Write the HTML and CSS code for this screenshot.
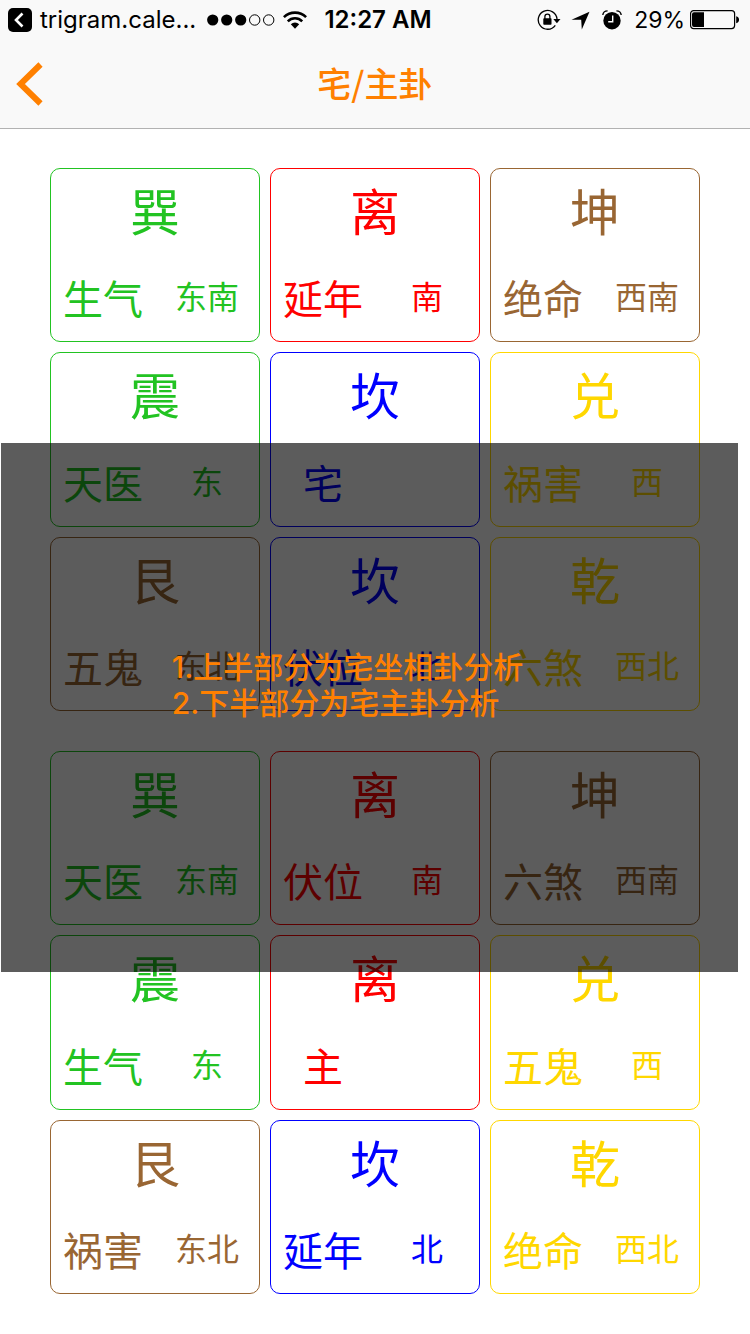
FILE: index.html
```html
<!DOCTYPE html>
<html lang="zh-CN">
<head>
<meta charset="utf-8">
<meta name="viewport" content="width=device-width, initial-scale=1">
<title>宅/主卦</title>
<link rel="stylesheet" href="styles.css">
</head>
<body>
<header class="header">
  <div class="status">
    <div class="status-left">
      <a class="return-link" href="#">
        <svg width="24" height="24" viewBox="0 0 24 24" aria-hidden="true"><rect width="24" height="24" rx="5"/><path d="M14.500 5.500 8 12l6.500 6.500" fill="none" stroke="#fff" stroke-width="2.600"/></svg>
        <span>trigram.cale...</span>
      </a>
      <svg class="signal" width="68" height="12" viewBox="0 0 68 12" aria-hidden="true"><circle cx="5.700" cy="6" r="5.600"/><circle cx="19.700" cy="6" r="5.600"/><circle cx="33.700" cy="6" r="5.600"/><g fill="none" stroke="#000"><circle cx="47.700" cy="6" r="5.200"/><circle cx="61.700" cy="6" r="5.200"/></g></svg>
      <svg class="wifi" width="24" height="18" viewBox="0 0 24 18" aria-hidden="true"><g fill="none" stroke="#000" stroke-width="2.600"><path d="M.9 6.200a15.700 15.700 0 0 1 22.200 0"/><path d="M4.800 10.300a10.200 10.200 0 0 1 14.400 0"/></g><path d="M7.800 13.200a6 6 0 0 1 8.400 0L12 17.800Z"/></svg>
    </div>
    <time class="clock">12:27 AM</time>
    <div class="status-right">
      <svg width="24" height="22" viewBox="0 0 24 22" aria-hidden="true"><path d="M18.300 16.300A9.400 9.400 0 1 1 20 10" fill="none" stroke="#000" stroke-width="1.300"/><path d="M16.300 10h7.200l-3.600 4.200Z"/><rect x="6.300" y="9.300" width="8.200" height="6.400" rx=".8"/><path d="M7.900 10V7.600a2.500 2.500 0 0 1 5 0V10" fill="none" stroke="#000" stroke-width="1.300"/></svg>
      <svg class="location" width="19" height="19" viewBox="0 0 19 19" aria-hidden="true"><path d="M.5 8.800 18.500.7 10.800 18.500 10.200 8.800Z"/></svg>
      <svg class="alarm" width="20" height="20" viewBox="0 0 20 20" aria-hidden="true"><circle cx="10" cy="10.700" r="8.700"/><path d="M.8 5C1.100 2.500 3 .9 5.600.9M19.200 5C18.900 2.500 17 .9 14.400.9" fill="none" stroke="#000" stroke-width="1.400"/><path d="M10.700 5.500v6.200H6.200" fill="none" stroke="#fff" stroke-width="1.400"/></svg>
      <span class="percent">29%</span>
      <svg width="50" height="20" viewBox="0 0 50 20" aria-hidden="true"><rect x=".6" y=".6" width="44" height="18" rx="3" fill="none" stroke="#000" stroke-width="1.200"/><path d="M4 2.200H14V17H4a2 2 0 0 1-2-2V4.200a2 2 0 0 1 2-2ZM46.200 6.200C50 7 50 12.400 46.200 13.200Z"/></svg>
    </div>
  </div>
  <nav class="nav">
    <button class="back" type="button" aria-label="返回"><svg width="28" height="44" viewBox="0 0 28 44" aria-hidden="true"><path d="M24.500 2.500 4.500 22l20 19.500" fill="none" stroke="#ff8000" stroke-width="6"/></svg></button>
    <h1 class="title">宅/主卦</h1>
  </nav>
</header>
<main class="charts">
  <section class="chart" aria-label="宅卦">
    <article class="card green"><h2 class="symbol">巽</h2><p class="fate">生气</p><p class="direction">东南</p></article>
    <article class="card red"><h2 class="symbol">离</h2><p class="fate">延年</p><p class="direction">南</p></article>
    <article class="card brown"><h2 class="symbol">坤</h2><p class="fate">绝命</p><p class="direction">西南</p></article>
    <article class="card green"><h2 class="symbol">震</h2><p class="fate">天医</p><p class="direction">东</p></article>
    <article class="card blue"><h2 class="symbol">坎</h2><p class="fate">宅</p></article>
    <article class="card yellow"><h2 class="symbol">兑</h2><p class="fate">祸害</p><p class="direction">西</p></article>
    <article class="card brown"><h2 class="symbol">艮</h2><p class="fate">五鬼</p><p class="direction">东北</p></article>
    <article class="card blue"><h2 class="symbol">坎</h2><p class="fate">伏位</p><p class="direction">北</p></article>
    <article class="card yellow"><h2 class="symbol">乾</h2><p class="fate">六煞</p><p class="direction">西北</p></article>
  </section>
  <section class="chart" aria-label="主卦">
    <article class="card green"><h2 class="symbol">巽</h2><p class="fate">天医</p><p class="direction">东南</p></article>
    <article class="card red"><h2 class="symbol">离</h2><p class="fate">伏位</p><p class="direction">南</p></article>
    <article class="card brown"><h2 class="symbol">坤</h2><p class="fate">六煞</p><p class="direction">西南</p></article>
    <article class="card green"><h2 class="symbol">震</h2><p class="fate">生气</p><p class="direction">东</p></article>
    <article class="card red"><h2 class="symbol">离</h2><p class="fate">主</p></article>
    <article class="card yellow"><h2 class="symbol">兑</h2><p class="fate">五鬼</p><p class="direction">西</p></article>
    <article class="card brown"><h2 class="symbol">艮</h2><p class="fate">祸害</p><p class="direction">东北</p></article>
    <article class="card blue"><h2 class="symbol">坎</h2><p class="fate">延年</p><p class="direction">北</p></article>
    <article class="card yellow"><h2 class="symbol">乾</h2><p class="fate">绝命</p><p class="direction">西北</p></article>
  </section>
</main>
<aside class="hint"><p class="hint-text">1.上半部分为宅坐相卦分析<br>2.下半部分为宅主卦分析</p></aside>
</body>
</html>
```
FILE: styles.css
```css
* { box-sizing: border-box; }
body {
  margin: 0;
  position: relative;
  background: #fff;
  font-family: "Noto Sans CJK SC", sans-serif;
}
h1, h2, p { margin: 0; font-weight: 400; }
svg { display: block; flex: none; }

.header { background: #f9f9f9; border-bottom: 1px solid #b2b2b2; }
.status {
  display: grid;
  grid-template-columns: 1fr auto 1fr;
  align-items: center;
  height: 40px;
  padding: 0 10px 0 8px;
  font: 24px/40px Inter, sans-serif;
  color: #000;
  white-space: nowrap;
}
.status-left, .status-right, .return-link { display: flex; align-items: center; }
.status-right { justify-content: flex-end; }
.return-link { gap: 8px; color: inherit; text-decoration: none; }
.signal { margin-left: 11px; }
.wifi { margin-left: 8px; }
.clock { padding-left: 8px; font-weight: 600; }
.location { margin-left: 10px; }
.alarm { margin-left: 12px; }
.percent { margin: 0 5px 0 12px; font-size: 23px; }

.nav {
  display: grid;
  grid-template-columns: 48px 1fr 48px;
  align-items: center;
  height: 88px;
}
.back {
  width: 48px;
  height: 88px;
  padding: 0 0 0 16px;
  border: 0;
  background: none;
  cursor: pointer;
}
.title {
  padding-bottom: 4px;
  color: #ff8000;
  font-size: 34px;
  font-weight: 500;
  text-align: center;
}

.charts { display: grid; gap: 40px; padding: 39px 50px 40px; }
.chart {
  display: grid;
  grid-template-columns: repeat(3, 1fr);
  grid-auto-rows: 1fr;
  gap: 10px;
  min-height: 543px;
}
.card {
  display: grid;
  grid-template: 1fr 1fr / 1fr 1fr;
  place-items: center;
  border: 1px solid currentColor;
  border-radius: 10px;
  white-space: nowrap;
}
.symbol { grid-column: 1 / -1; padding-bottom: 6px; font-size: 50px; line-height: 72px; }
.fate { padding-bottom: 2px; font-size: 40px; line-height: 60px; }
.direction { padding-bottom: 6px; font-size: 32px; line-height: 60px; }
.green { color: #22c322; }
.red { color: #f00; }
.brown { color: #996633; }
.blue { color: #00f; }
.yellow { color: #ffd700; }

.hint {
  position: absolute;
  top: 443px;
  left: 1px;
  right: 12px;
  display: grid;
  place-items: center;
  min-height: 529px;
  padding: 0 44px 46px 0;
  background: rgba(0, 0, 0, 0.64);
}
.hint-text {
  color: #ff8000;
  font-family: Inter, "Noto Sans CJK SC", sans-serif;
  font-size: 30px;
  font-weight: 500;
  line-height: 36px;
}
```
